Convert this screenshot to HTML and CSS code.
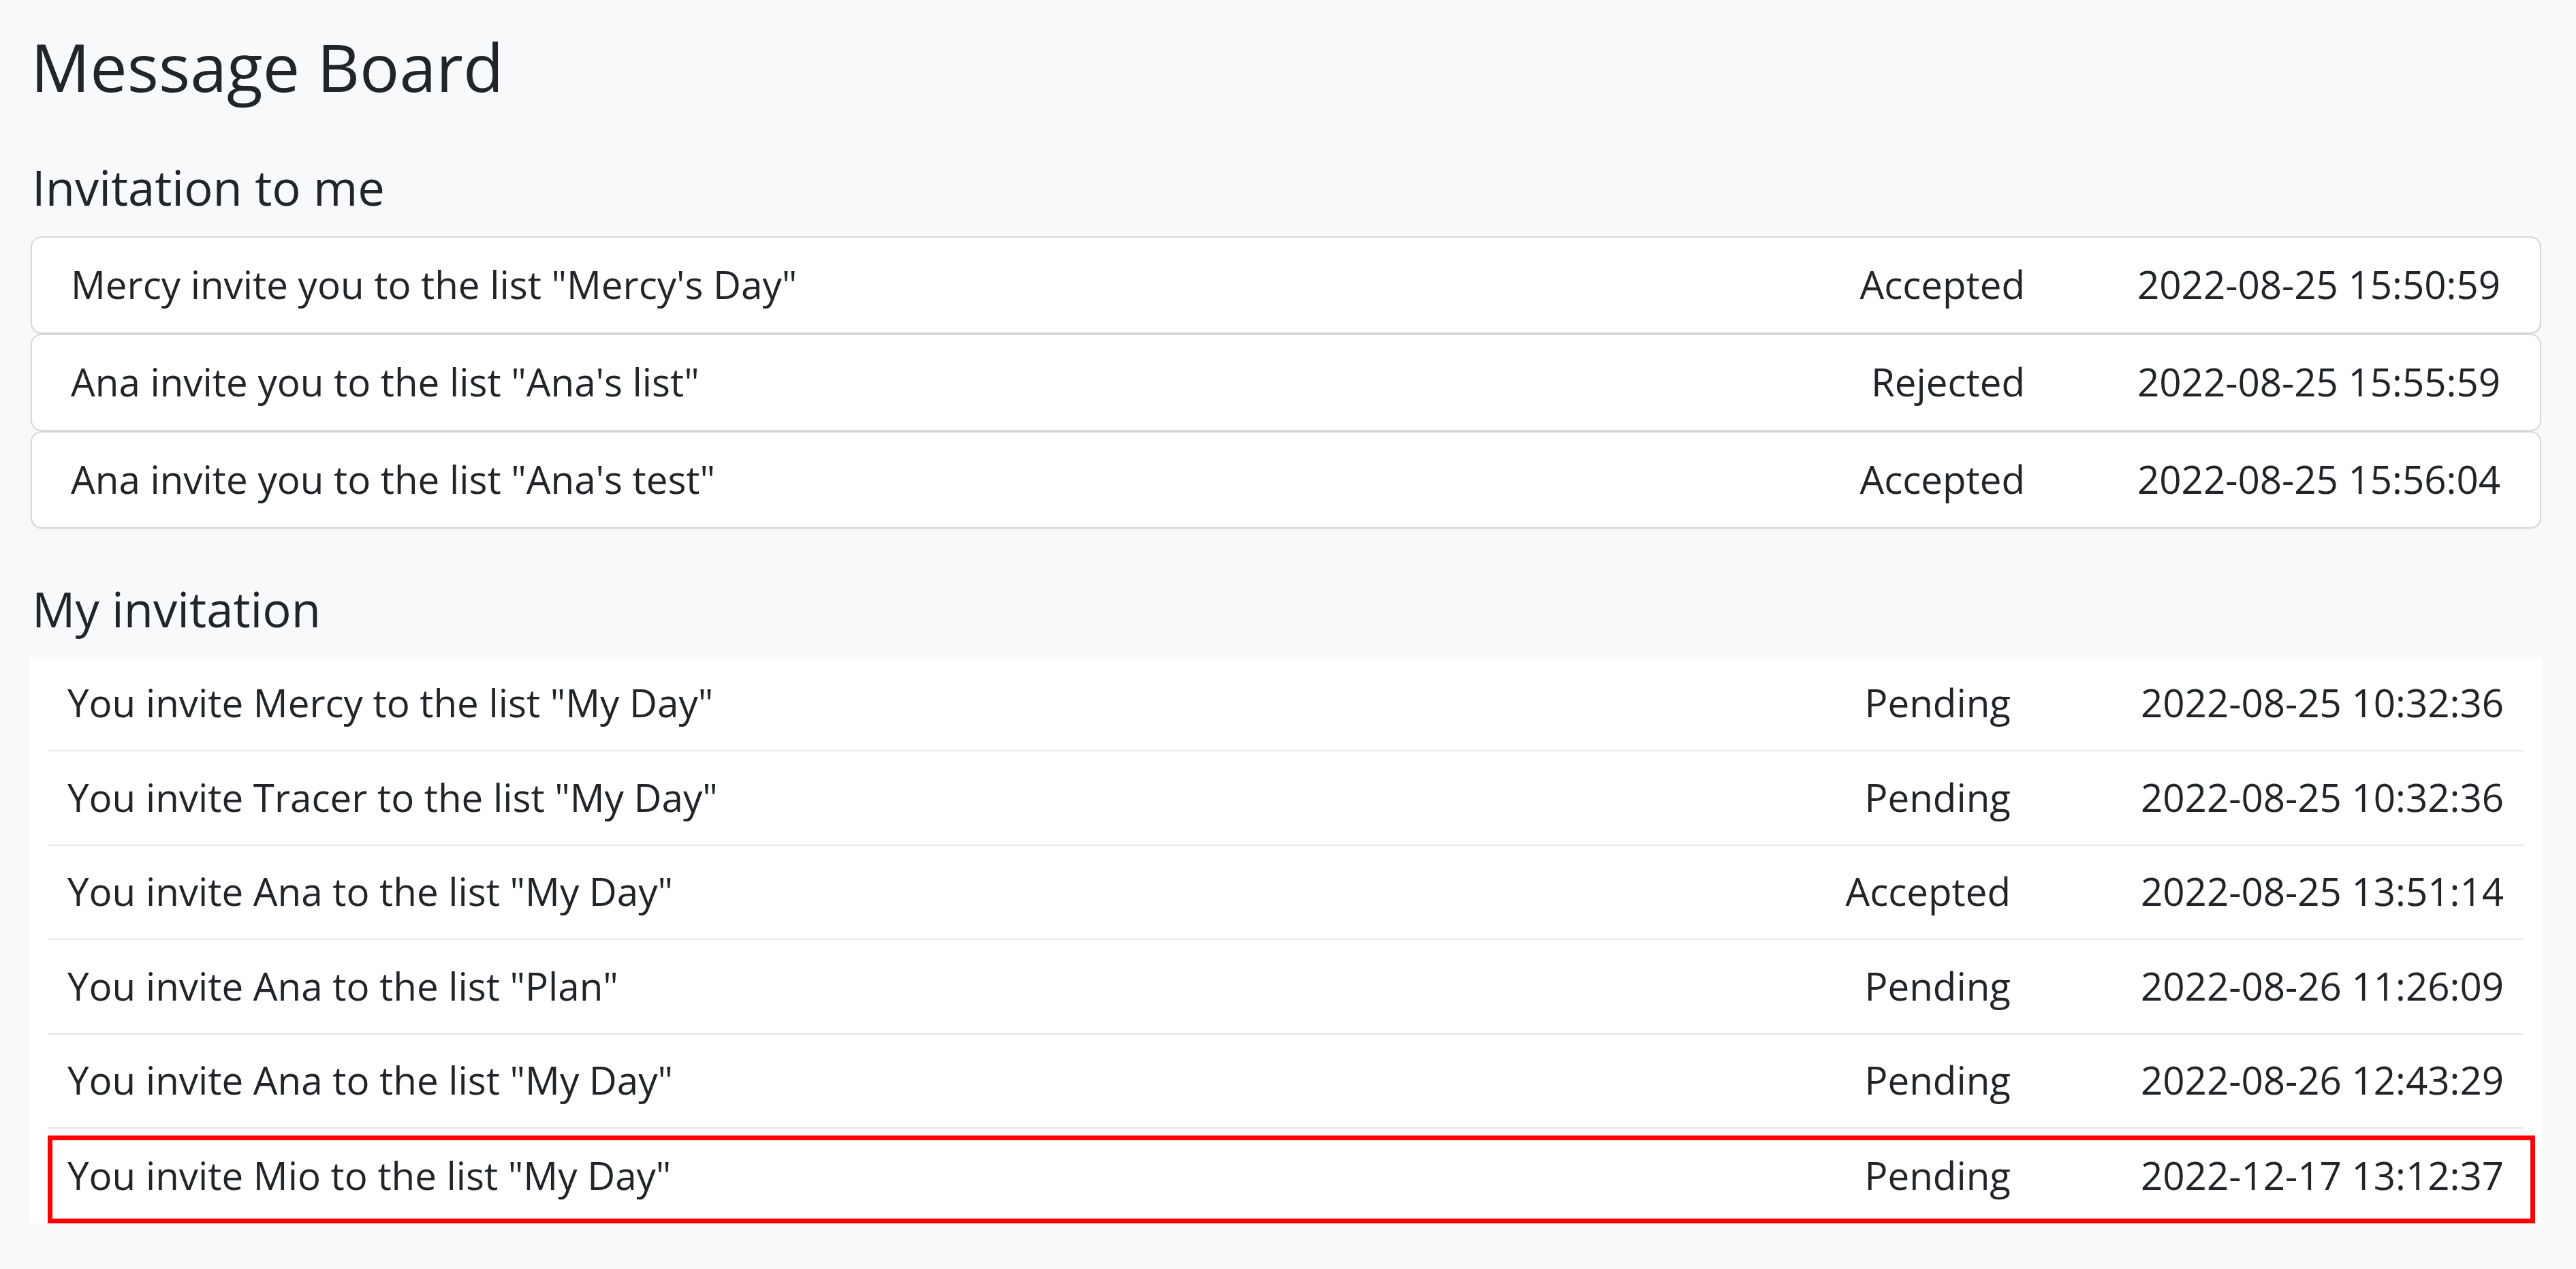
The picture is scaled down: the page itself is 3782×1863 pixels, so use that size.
FILE: index.html
```html
<!DOCTYPE html>
<html lang="en">
<head>
<meta charset="utf-8">
<title>Message Board</title>
<link rel="stylesheet" href="styles.css">
</head>
<body>
<main class="page">
  <h1 class="title">Message Board</h1>

  <h3 class="section-title">Invitation to me</h3>
  <ul class="card-list">
    <li class="card-item">
      <span class="msg">Mercy invite you to the list "Mercy's Day"</span>
      <span class="status">Accepted</span>
      <span class="date">2022-08-25 15:50:59</span>
    </li>
    <li class="card-item">
      <span class="msg">Ana invite you to the list "Ana's list"</span>
      <span class="status">Rejected</span>
      <span class="date">2022-08-25 15:55:59</span>
    </li>
    <li class="card-item">
      <span class="msg">Ana invite you to the list "Ana's test"</span>
      <span class="status">Accepted</span>
      <span class="date">2022-08-25 15:56:04</span>
    </li>
  </ul>

  <h3 class="section-title section-title-2">My invitation</h3>
  <div class="panel">
    <ul class="row-list">
      <li class="row-item">
        <span class="msg">You invite Mercy to the list "My Day"</span>
        <span class="status">Pending</span>
        <span class="date">2022-08-25 10:32:36</span>
      </li>
      <li class="row-item">
        <span class="msg">You invite Tracer to the list "My Day"</span>
        <span class="status">Pending</span>
        <span class="date">2022-08-25 10:32:36</span>
      </li>
      <li class="row-item">
        <span class="msg">You invite Ana to the list "My Day"</span>
        <span class="status">Accepted</span>
        <span class="date">2022-08-25 13:51:14</span>
      </li>
      <li class="row-item">
        <span class="msg">You invite Ana to the list "Plan"</span>
        <span class="status">Pending</span>
        <span class="date">2022-08-26 11:26:09</span>
      </li>
      <li class="row-item">
        <span class="msg">You invite Ana to the list "My Day"</span>
        <span class="status">Pending</span>
        <span class="date">2022-08-26 12:43:29</span>
      </li>
      <li class="row-item">
        <span class="msg">You invite Mio to the list "My Day"</span>
        <span class="status">Pending</span>
        <span class="date">2022-12-17 13:12:37</span>
      </li>
    </ul>
    <div class="highlight"></div>
  </div>
</main>
</body>
</html>
```

FILE: styles.css
```css
* {
  box-sizing: border-box;
}

html, body {
  margin: 0;
  padding: 0;
  background: #f8f9fa;
}

body {
  font-family: "Open Sans", "Noto Sans", "Liberation Sans", sans-serif;
  color: #212529;
  font-size: 56.5px;
  line-height: 1.5;
}

.page {
  padding: 39px 51px 0 45px;
}

.title {
  margin: 0;
  font-size: 97px;
  font-weight: 400;
  line-height: 1.2;
}

.section-title {
  margin: 78px 0 29px 2px;
  font-size: 70.5px;
  font-weight: 400;
  line-height: 1.2;
}

.section-title-2 {
  margin-top: 76px;
  margin-bottom: 28px;
}

.card-list,
.row-list {
  list-style: none;
  margin: 0;
  padding: 0;
}

.card-item {
  display: flex;
  align-items: center;
  height: 143px;
  padding: 0 58px 0 57px;
  background: #ffffff;
  border: 2px solid #d7d7d7;
  border-radius: 16px;
  box-shadow: 0 1px 1px rgba(0, 0, 0, 0.06);
}

.msg {
  flex: 1;
  white-space: nowrap;
}

.status {
  flex: none;
  text-align: right;
  white-space: nowrap;
}

.date {
  flex: none;
  text-align: right;
  white-space: nowrap;
}

.card-item .date {
  width: 698px;
}

.panel {
  position: relative;
  background: #ffffff;
  margin-right: -2px;
  margin-left: -2px;
  padding: 0 28px 0 27px;
}

.row-item {
  display: flex;
  align-items: center;
  height: 138.5px;
  padding: 0 29px;
  border-bottom: 2px solid #e4e7ea;
}

.row-item:last-child {
  border-bottom: none;
}

.row-item .date {
  width: 724px;
}

.highlight {
  position: absolute;
  left: 27px;
  top: 702px;
  width: 3652px;
  bottom: 0;
  border: 7px solid #ff0000;
  pointer-events: none;
}
```
